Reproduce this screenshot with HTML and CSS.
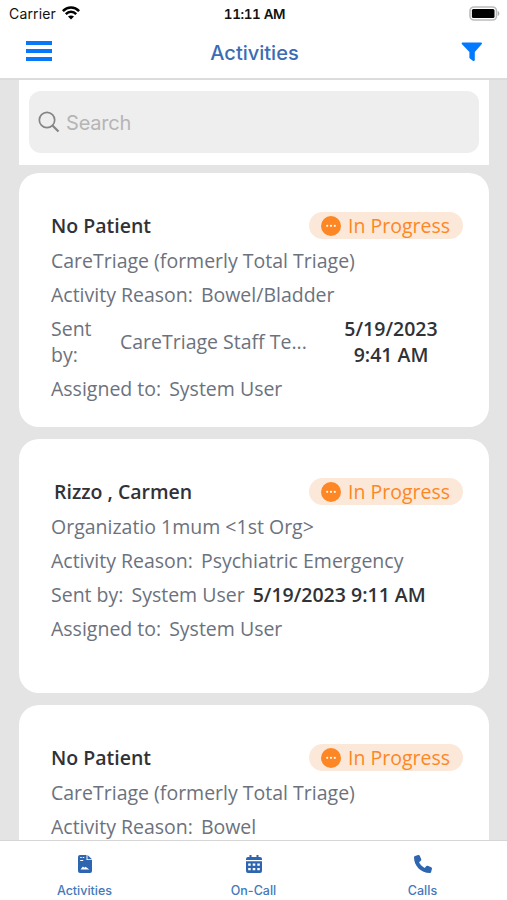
FILE: index.html
```html
<!DOCTYPE html>
<html lang="en">
<head>
<meta charset="utf-8">
<title>Activities</title>
<link rel="stylesheet" href="styles.css">
</head>
<body>
<svg class="defs" aria-hidden="true">
  <symbol id="pending" viewBox="0 0 20 20">
    <circle cx="10" cy="10" r="10" fill="#fd8724"/>
    <circle cx="6.2" cy="9.8" r="1.1" fill="#fff"/>
    <circle cx="10" cy="9.8" r="1.1" fill="#fff"/>
    <circle cx="13.8" cy="9.8" r="1.1" fill="#fff"/>
  </symbol>
</svg>
<div class="status">
  <div class="carrier"><span>Carrier</span>
    <svg width="18" height="14" viewBox="0 0 18 14" fill="none" stroke="#000" stroke-width="2.5"><path d="M.9 5.1C5.5.3 12.5.3 17.1 5.1M3.8 8.1c3-3 7.400-3 10.400 0"/><path d="M9 13.500 6 10.600c1.700-1.500 4.300-1.500 6 0z" fill="#000" stroke="none"/></svg>
  </div>
  <div class="clock">11:11 AM</div>
  <svg class="battery" width="31" height="15" viewBox="0 0 31 15"><rect x="1" y="1" width="26.500" height="13" rx="4" fill="#fff" stroke="#bbb" stroke-width="1.600"/><rect x="2.900" y="2.900" width="22.600" height="9.200" rx="1.500" fill="#000"/><path d="M28.800 5c2 .7 2 4.300 0 5z" fill="#aaa"/></svg>
</div>
<header class="header">
  <div class="menu"><i></i><i></i><i></i></div>
  <h1>Activities</h1>
  <svg class="filter" width="22" height="20" viewBox="0 0 22 20"><path d="M1.400.5h18.800q1.300.4.600 1.600L13.800 10v8.300q-.5 1.200-1.700.6l-3.200-2.300q-.5-.4-.5-1V10L.8 2.100Q.200.900 1.400.5z" fill="#007aff"/></svg>
</header>
<main class="content">
  <div class="searchbox"><div class="search">
    <svg width="22" height="22" viewBox="0 0 22 22" fill="none" stroke="#858585" stroke-width="1.700"><circle cx="9" cy="9" r="7.700"/><path d="m14.500 14.500 6 6" stroke-width="2.200"/></svg>
    <span>Search</span>
  </div></div>
  <article class="card">
    <div class="top"><h2>No Patient</h2><div class="badge"><svg><use href="#pending"/></svg><span>In Progress</span></div></div>
    <p>CareTriage (formerly Total Triage)</p>
    <p><span>Activity Reason:</span><span>Bowel/Bladder</span></p>
    <div class="sent"><span>Sent<br>by:</span><span class="sender">CareTriage Staff Te...</span><time>5/19/2023<br>9:41 AM</time></div>
    <p><span>Assigned to:</span><span>System User</span></p>
  </article>
  <article class="card">
    <div class="top"><h2 class="named">Rizzo , Carmen</h2><div class="badge"><svg><use href="#pending"/></svg><span>In Progress</span></div></div>
    <p>Organizatio 1mum &lt;1st Org&gt;</p>
    <p><span>Activity Reason:</span><span>Psychiatric Emergency</span></p>
    <p><span>Sent by:</span><span>System User</span><time>5/19/2023 9:11 AM</time></p>
    <p><span>Assigned to:</span><span>System User</span></p>
  </article>
  <article class="card">
    <div class="top"><h2>No Patient</h2><div class="badge"><svg><use href="#pending"/></svg><span>In Progress</span></div></div>
    <p>CareTriage (formerly Total Triage)</p>
    <p><span>Activity Reason:</span><span>Bowel</span></p>
  </article>
</main>
<nav class="tabs">
  <a><svg width="14" height="18" viewBox="0 0 14 18"><path d="M2 0h6.500v5H14v11q0 2-2 2H2q-2 0-2-2V2q0-2 2-2z" fill="#2d65b0"/><path d="M9.500 0 14 4.200H9.500z" fill="#2d65b0"/><path d="M2.200 2.500h1.500M4.700 2.500h1.500M2.200 5.500h3" stroke="#fff" stroke-width="1.200"/><path d="m2.500 14.500 2.400-3 1.400 1.300 1.200-1 3.800 2.700z" fill="#fff"/></svg><span>Activities</span></a>
  <a><svg width="16" height="18" viewBox="0 0 16 18"><path d="M3.500 0h2v2h5V0h2v2H14q2 0 2 2v1H0V4q0-2 2-2h1.500zM0 6.200h16V16q0 2-2 2H2q-2 0-2-2z" fill="#2d65b0"/><path d="M2.200 8.500h2.500v2.300H2.200zm4.500 0h2.600v2.300H6.700zm4.600 0h2.500v2.300h-2.500zM2.200 13h2.500v2.300H2.200zm4.500 0h2.600v2.300H6.700zm4.600 0h2.500v2.300h-2.500z" fill="#fff"/></svg><span>On-Call</span></a>
  <a><svg width="18" height="18" viewBox="0 0 512 512"><path d="M164.900 24.600c-7.700-18.600-28-28.500-47.400-23.200l-88 24C12.100 30.200 0 46 0 64c0 247.400 200.600 448 448 448 18 0 33.800-12.100 38.600-29.500l24-88c5.300-19.400-4.600-39.700-23.200-47.400l-96-40c-16.300-6.800-35.200-2.100-46.300 11.600L304.700 368C234.300 334.700 177.300 277.700 144 207.300l49.300-40.400c13.700-11.200 18.400-30 11.600-46.300z" fill="#2d65b0"/></svg><span>Calls</span></a>
</nav>
</body>
</html>
```
FILE: styles.css
```css
* { box-sizing: border-box; }
body { margin: 0; height: 900px; overflow: hidden; display: flex; flex-direction: column; background: #fff; font-family: Inter, sans-serif; }
h1, h2, p { margin: 0; }
svg { display: block; flex: none; }
.defs { display: none; }
.status { height: 28px; flex: none; display: grid; grid-template-columns: 1fr auto 1fr; align-items: center; padding: 0 7px 2px 9px; color: #111; font-size: 14px; }
.carrier { display: flex; align-items: center; gap: 6px; letter-spacing: .15px; }
.clock { font-weight: 600; font-size: 13.500px; font-variant-numeric: tabular-nums; letter-spacing: -.4px; padding-top: 1px; }
.battery { justify-self: end; }
.header { height: 52px; flex: none; display: grid; grid-template-columns: 1fr auto 1fr; align-items: center; padding: 0 24px 2px 26px; border-bottom: 2px solid #dcdcdc; }
.menu { width: 26px; display: grid; gap: 4px; margin-bottom: 3px; }
.menu i { height: 4px; background: #0878f8; }
h1 { color: #3a6db5; font-size: 20px; font-weight: 550; padding-top: 1px; }
.filter { justify-self: end; }
.content { flex: 1; min-height: 0; overflow: hidden; background: #e4e4e4; padding: 0 18px 0 19px; font-family: "Open Sans", sans-serif; }
.searchbox { height: 85px; padding: 11px 10px 12px; background: #fff; margin-bottom: 8px; }
.search { height: 62px; border-radius: 12px; background: #eee; display: flex; align-items: center; gap: 6px; padding-left: 9px; color: #b5b5b5; font: 20px Inter, sans-serif; letter-spacing: -.2px; }
.search span { padding-top: 2px; }
.card { height: 254px; margin-bottom: 12px; border-radius: 20px; background: #fff; padding: 36px 26px 0 32px; color: #6c727d; font-size: 19.500px; }
.top { height: 34.500px; display: flex; justify-content: space-between; align-items: center; }
h2 { font-size: 19.500px; line-height: 34px; font-weight: 600; color: #303236; }
.named { padding-left: 3px; }
.badge { width: 154px; height: 27px; margin-bottom: 1px; border-radius: 14px; background: #fce8d9; color: #fd8724; display: flex; align-items: center; gap: 7px; padding-left: 12px; line-height: 27px; }
.badge svg { width: 20px; height: 20px; }
.card p { display: flex; gap: 8px; height: 34.200px; line-height: 34px; white-space: nowrap; }
time { color: #303236; font-weight: 600; }
.sent { height: 60.500px; display: grid; grid-template-columns: 69px 204px 134px; align-items: center; line-height: 26.500px; white-space: nowrap; }
.sent time { text-align: center; }
.tabs { height: 60px; flex: none; border-top: 1px solid #d6d6d6; background: #fff; display: grid; grid-template-columns: repeat(3, 1fr); color: #4379bd; }
.tabs a { display: flex; flex-direction: column; align-items: center; padding-top: 14px; gap: 9px; font-size: 12.500px; font-weight: 500; line-height: 18px; }
```
